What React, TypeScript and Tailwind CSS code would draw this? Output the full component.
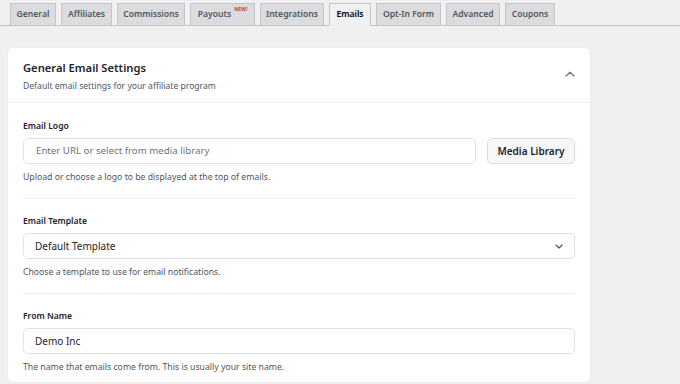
import React from "react"

const tabs = [
  { label: "General", w: "w-[46px]" },
  { label: "Affiliates", w: "w-[51px]" },
  { label: "Commissions", w: "w-[68px]" },
  { label: "Payouts", w: "w-[65px]", badge: true },
  { label: "Integrations", w: "w-[64px]" },
  { label: "Emails", w: "w-[42px]", active: true },
  { label: "Opt-In Form", w: "w-[65px]" },
  { label: "Advanced", w: "w-[54px]" },
  { label: "Coupons", w: "w-[50px]" },
]

function ChevronUp() {
  return (
    <svg width="10" height="6" viewBox="0 0 10 6" fill="none">
      <path d="M1 5L5 1.2L9 5" stroke="#6b7280" strokeWidth="1.2" strokeLinecap="round" strokeLinejoin="round" />
    </svg>
  )
}

function ChevronDown() {
  return (
    <svg width="8" height="5" viewBox="0 0 8 5" fill="none">
      <path d="M1 1L4 4L7 1" stroke="#4b5563" strokeWidth="1.2" strokeLinecap="round" strokeLinejoin="round" />
    </svg>
  )
}

function Field({ label, help, children, last }: any) {
  return (
    <div>
      <div className="text-[8.6px] leading-[13px] font-semibold text-[#1d2327]">{label}</div>
      <div className="mt-[5px]">{children}</div>
      <div className="mt-[7px] text-[8.7px] leading-[13px] text-[#50575e]">{help}</div>
      {!last && <div className="mt-[14px] mb-[16px] h-px bg-[#f0f0f1]" />}
    </div>
  )
}

export default function App() {
  return (
    <div className="w-[680px] h-[384px] overflow-hidden bg-[#f0f0f1]" style={{ fontFamily: '"Noto Sans", sans-serif' }}>
      {/* TABS */}
      <div className="flex items-end gap-[5px] pl-[10px] pt-[3px] border-b border-[#c3c4c7]">
        {tabs.map((t) => (
          <div
            key={t.label}
            className={
              "-mb-px h-[23px] flex items-center justify-center border text-[8.6px] font-semibold " +
              t.w +
              (t.active
                ? " bg-[#f0f0f1] border-[#c3c4c7] border-b-[#f0f0f1] text-[#000]"
                : " bg-[#dcdcde] border-[#c3c4c7] text-[#50575e]")
            }
          >
            <span className="flex items-start">
              {t.label}
              {t.badge && (
                <span className="ml-[3px] -mt-[2px] text-[5px] leading-[6px] font-bold text-[#d63638]">NEW!</span>
              )}
            </span>
          </div>
        ))}
      </div>

      {/* CARD */}
      <div className="ml-[7px] mt-[21px] w-[584px] bg-white rounded-[6px] border border-[#ececed]">
        <div className="flex items-start justify-between px-[15px] pt-[11px] pb-[9px] border-b border-[#f0f0f1]">
          <div>
            <div className="text-[11.2px] leading-[17px] font-semibold text-[#1d2327]">General Email Settings</div>
            <div className="mt-[4px] text-[8.6px] leading-[13px] text-[#50575e]">Default email settings for your affiliate program</div>
          </div>
          <div className="mt-[12px]">
            <ChevronUp />
          </div>
        </div>

        <div className="px-[15px] pt-[17px] pb-[8px]">
          <Field label="Email Logo" help="Upload or choose a logo to be displayed at the top of emails.">
            <div className="flex gap-[11px]">
              <div className="flex-1 h-[26px] flex items-center px-[12px] border border-[#e2e2e4] rounded-[5px] text-[9.7px] text-[#6b7280]">
                Enter URL or select from media library
              </div>
              <div className="w-[88px] h-[26px] flex items-center justify-center border border-[#dcdcde] rounded-[5px] bg-[#f6f7f7] text-[10px] font-semibold text-[#1d2327]">
                Media Library
              </div>
            </div>
          </Field>

          <Field label="Email Template" help="Choose a template to use for email notifications.">
            <div className="h-[26px] flex items-center justify-between pl-[11px] pr-[11px] border border-[#e2e2e4] rounded-[5px] text-[10px] text-[#1d2327]">
              <span>Default Template</span>
              <ChevronDown />
            </div>
          </Field>

          <Field label="From Name" help="The name that emails come from. This is usually your site name." last>
            <div className="h-[26px] flex items-center pl-[11px] border border-[#e2e2e4] rounded-[5px] text-[10px] text-[#1d2327]">
              Demo Inc
            </div>
          </Field>
        </div>
      </div>
    </div>
  )
}
